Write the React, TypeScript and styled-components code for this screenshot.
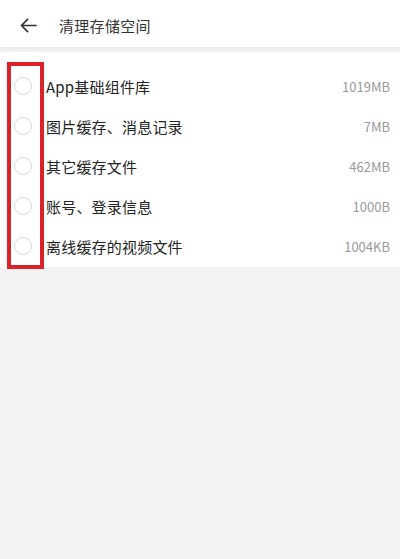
import React from 'react';
import styled, { createGlobalStyle } from 'styled-components';

const GlobalStyle = createGlobalStyle`
  html, body {
    margin: 0;
    padding: 0;
    background: #f2f2f2;
    font-family: "Noto Sans CJK SC", "Noto Sans", sans-serif;
  }
`;

const items = [
  { id: 'a', name: 'App基础组件库', size: '1019MB' },
  { id: 'b', name: '图片缓存、消息记录', size: '7MB' },
  { id: 'c', name: '其它缓存文件', size: '462MB' },
  { id: 'd', name: '账号、登录信息', size: '1000B' },
  { id: 'e', name: '离线缓存的视频文件', size: '1004KB' },
];

const BackArrow: React.FC = () => (
  <svg width="17" height="15" viewBox="0 0 18 16" fill="none">
    <path d="M17 8H2M8 1.5L1.5 8 8 14.5" stroke="#333" strokeWidth="1.8" strokeLinecap="round" strokeLinejoin="round" />
  </svg>
);

export default function App() {
  return (
    <Page>
      <GlobalStyle />
      <Header>
        <BackButton>
          <BackArrow />
        </BackButton>
        <Title>清理存储空间</Title>
      </Header>

      <List>
        {items.map((item) => (
          <Row key={item.id}>
            <Radio />
            <Name>{item.name}</Name>
            <Size>{item.size}</Size>
          </Row>
        ))}
        <Highlight />
      </List>
    </Page>
  );
}

const Page = styled.div`
  min-height: 559px;
  background: #f2f2f2;
`;

const Header = styled.div`
  display: flex;
  align-items: center;
  height: 47px;
  padding: 0 0 0 20px;
  background: #fff;
  box-shadow: 0 1px 4px rgba(0, 0, 0, 0.06);
`;

const BackButton = styled.div`
  display: flex;
  align-items: center;
  width: 39px;
  height: 20px;
  margin-top: 4px;
`;

const Title = styled.div`
  font-size: 15px;
  color: #333;
  margin-top: 4px;
  letter-spacing: 0.3px;
`;

const List = styled.div`
  position: relative;
  margin-top: 5px;
  padding-top: 14px;
  padding-bottom: 1px;
  background: #fff;
`;

const Row = styled.div`
  display: flex;
  align-items: center;
  height: 40px;
  padding: 0 10px 0 14px;
`;

const Radio = styled.div`
  width: 18px;
  height: 18px;
  border-radius: 50%;
  border: 1px solid #d8d8d8;
  box-sizing: border-box;
  margin-right: 14px;
  flex-shrink: 0;
`;

const Name = styled.div`
  flex: 1;
  font-size: 15px;
  letter-spacing: 0.2px;
  color: #222;
`;

const Size = styled.div`
  font-size: 13px;
  color: #999;
`;

const Highlight = styled.div`
  position: absolute;
  left: 7px;
  top: 10px;
  width: 37px;
  height: 207px;
  border: 4px solid #dc2229;
  box-sizing: border-box;
`;
